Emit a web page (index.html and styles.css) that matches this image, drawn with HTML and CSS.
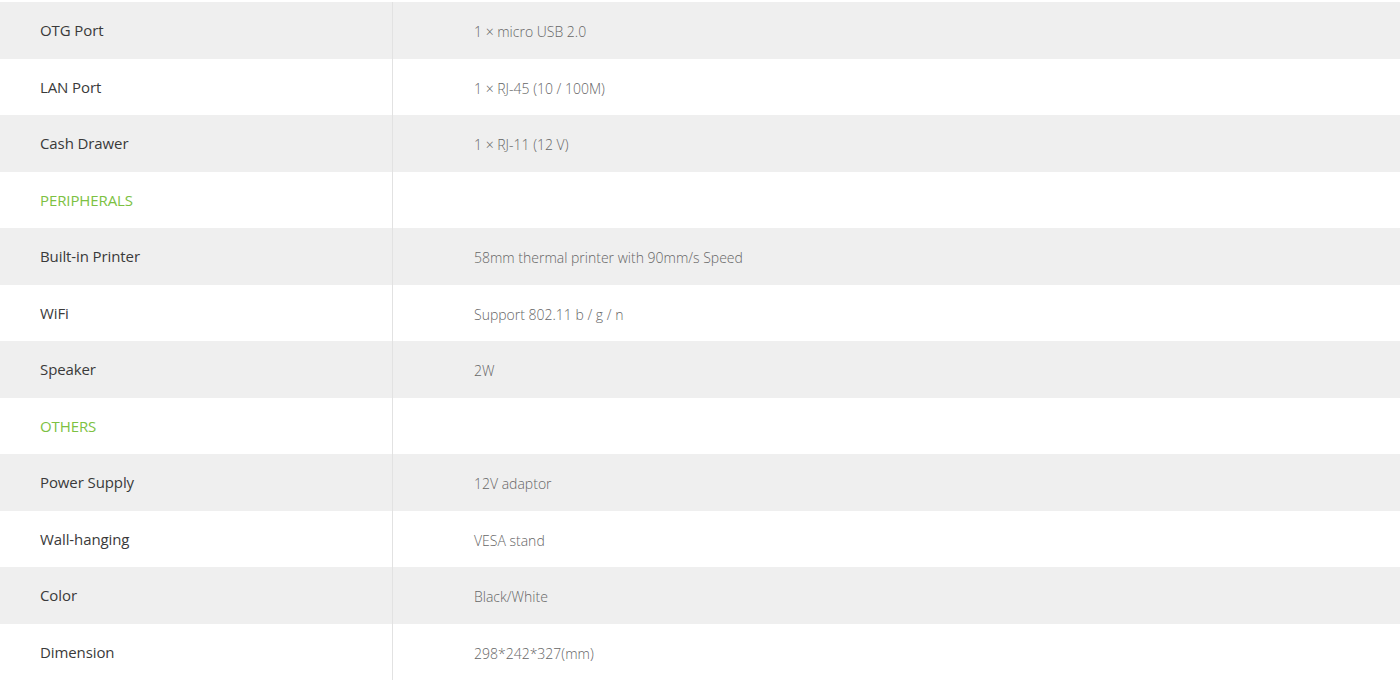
FILE: index.html
```html
<!DOCTYPE html>
<html>
<head>
<meta charset="utf-8">
<link rel="stylesheet" href="styles.css">
</head>
<body>
<div class="spec">
  <div class="row gray"><div class="label">OTG Port</div><div class="value">1 × micro USB 2.0</div></div>
  <div class="row"><div class="label">LAN Port</div><div class="value">1 × RJ-45 (10 / 100M)</div></div>
  <div class="row gray"><div class="label">Cash Drawer</div><div class="value">1 × RJ-11 (12 V)</div></div>
  <div class="row"><div class="label section">PERIPHERALS</div><div class="value"></div></div>
  <div class="row gray"><div class="label">Built-in Printer</div><div class="value">58mm thermal printer with 90mm/s Speed</div></div>
  <div class="row"><div class="label">WiFi</div><div class="value">Support 802.11 b / g / n</div></div>
  <div class="row gray"><div class="label">Speaker</div><div class="value">2W</div></div>
  <div class="row"><div class="label section">OTHERS</div><div class="value"></div></div>
  <div class="row gray"><div class="label">Power Supply</div><div class="value">12V adaptor</div></div>
  <div class="row"><div class="label">Wall-hanging</div><div class="value">VESA stand</div></div>
  <div class="row gray"><div class="label">Color</div><div class="value">Black/White</div></div>
  <div class="row"><div class="label">Dimension</div><div class="value">298*242*327(mm)</div></div>
</div>
</body>
</html>
```
FILE: styles.css
```css
html, body {
  margin: 0;
  padding: 0;
  background: #fff;
}
body {
  font-family: "Open Sans", "Liberation Sans", sans-serif;
}
.spec {
  padding-top: 2px;
  display: flex;
  flex-direction: column;
}
.row {
  display: grid;
  grid-template-columns: 393px 1fr;
  height: 56.5px;
  align-items: stretch;
}
.row.gray {
  background: #efefef;
}
.label {
  display: flex;
  align-items: center;
  padding-left: 40px;
  font-size: 15px;
  color: #3a3a3a;
  letter-spacing: -0.1px;
  border-right: 1px solid #e2e2e2;
}
.label.section {
  color: #7cc142;
}
.value {
  display: flex;
  align-items: center;
  padding-left: 81px;
  padding-top: 3px;
  font-size: 14px;
  font-weight: 300;
  color: #666;
  letter-spacing: 0;
}
```
